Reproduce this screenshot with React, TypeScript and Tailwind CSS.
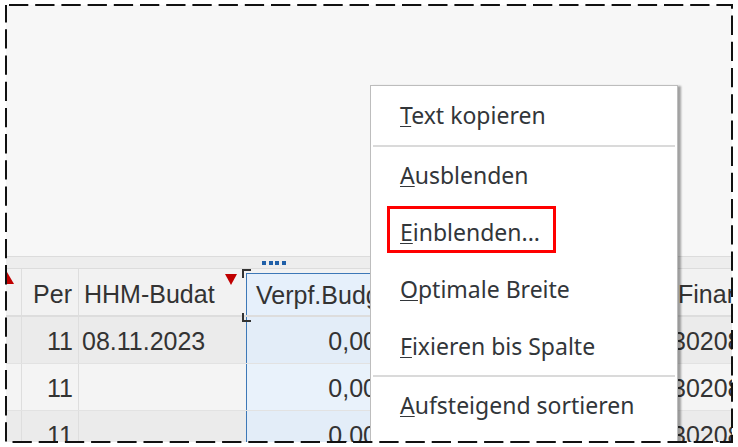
import React from "react";

const tableFont = { fontFamily: '"Liberation Sans", Arial, sans-serif' };
const menuFont = { fontFamily: '"Noto Sans", "Open Sans", sans-serif' };

function MenuItem({ first, rest, h = "h-[57px]", boxed = false }: { first: string; rest: string; h?: string; boxed?: boolean }) {
  return (
    <div className={`relative flex shrink-0 items-center pl-[29px] ${h} text-[23px] text-[#32363a]`}>
      {boxed && <div className="absolute left-[16px] top-[2px] h-[47px] w-[169px] border-[3px] border-[#ff0000]" />}
      <span className="leading-none">
        <span className="underline decoration-1 underline-offset-[2px]">{first}</span>
        {rest}
      </span>
    </div>
  );
}

function Row({ bg, blue, per, date }: { bg: string; blue: string; per: string; date: string }) {
  return (
    <div className={`grid h-[47px] shrink-0 grid-cols-[16px_57px_167px_139px_285px_1fr] border-b border-[#e2e2e2] text-[25px] text-[#333333] ${bg}`}>
      <div className="border-r border-[#dedede]" />
      <div className="flex items-center justify-end border-r border-[#dedede] pr-[5px] pt-[4px]">{per}</div>
      <div className="flex items-center pl-[3px] pt-[4px]">{date}</div>
      <div className={`flex items-center justify-end border-l border-[#3d78b7] pr-[8px] pt-[4px] ${blue}`}>0,00</div>
      <div className="border-r border-[#dedede]" />
      <div className="flex items-center whitespace-nowrap pl-[2px] pt-[4px]">3020800000</div>
    </div>
  );
}

export default function App() {
  return (
    <div className="relative h-[447px] w-[738px] overflow-hidden bg-white">
      <div className="relative ml-[6px] mt-[5px] flex h-[437px] w-[726px] flex-col overflow-hidden bg-[#f7f7f7]" style={tableFont}>
        <div className="h-[251px] shrink-0" />
        <div className="h-px shrink-0 bg-[#dcdcdc]" />
        <div className="flex h-[11px] shrink-0 items-center bg-[#ededed] pl-[256px]">
          <div className="flex gap-[2.5px]">
            <div className="h-[4px] w-[4px] bg-[#1f5fa8]" />
            <div className="h-[4px] w-[4px] bg-[#1f5fa8]" />
            <div className="h-[4px] w-[4px] bg-[#1f5fa8]" />
            <div className="h-[4px] w-[4px] bg-[#1f5fa8]" />
          </div>
        </div>
        <div className="h-px shrink-0 bg-[#dcdcdc]" />
        {/* header */}
        <div className="relative grid h-[48px] shrink-0 grid-cols-[16px_57px_167px_139px_285px_1fr] border-b-2 border-[#dddddd] bg-[#f2f2f2] text-[25px] text-[#333333]">
          <div className="relative border-r border-[#dedede]">
            <svg className="absolute left-0 top-0" width="16" height="20" viewBox="0 0 16 20">
              <polygon points="1,3 8,15 -6,15" fill="#c00000" />
            </svg>
          </div>
          <div className="flex items-center justify-end border-r border-[#dedede] pr-[6px] pt-[5px]">Per</div>
          <div className="relative flex items-center pl-[5px] pt-[5px]">
            HHM-Budat
            <svg className="absolute left-[146px] top-[5px]" width="12" height="11" viewBox="0 0 12 11">
              <polygon points="0,0 12,0 6,11" fill="#c00000" />
            </svg>
          </div>
          <div className="mt-[4px] flex items-center overflow-hidden whitespace-nowrap border-l border-t border-[#3d78b7] bg-[#e6f0fb] pl-[9px] pt-[2px]">
            Verpf.Budget
          </div>
          <div className="border-r border-[#dedede]" />
          <div className="flex items-center whitespace-nowrap pl-[8px] pt-[5px]">Finanzposition</div>
          {/* selection corner brackets */}
          <div className="absolute left-[236px] top-0 h-[9px] w-[9px] border-l-2 border-t-2 border-[#333333]" />
          <div className="absolute left-[236px] top-[44px] h-[9px] w-[9px] border-b-2 border-l-2 border-[#333333]" />
        </div>
        <Row bg="bg-[#ebebeb]" blue="bg-[#e3edf8]" per="11" date="08.11.2023" />
        <Row bg="bg-[#f4f4f4]" blue="bg-[#e9f2fb]" per="11" date="" />
        <Row bg="bg-[#ebebeb]" blue="bg-[#e3edf8]" per="11" date="" />

        {/* context menu */}
        <div
          className="absolute left-[364px] top-[80px] w-[308px] border border-[#bdbdbd] bg-white shadow-[3px_1px_2px_rgba(0,0,0,0.35)]"
          style={menuFont}
        >
          <MenuItem first="T" rest="ext kopieren" h="h-[59px]" />
          <div className="mx-[2px] h-[2px] bg-[#dadada]" />
          <MenuItem first="A" rest="usblenden" />
          <MenuItem first="E" rest="inblenden..." boxed />
          <MenuItem first="O" rest="ptimale Breite" />
          <MenuItem first="F" rest="ixieren bis Spalte" />
          <div className="mx-[2px] h-[2px] bg-[#dadada]" />
          <MenuItem first="A" rest="ufsteigend sortieren" />
          <MenuItem first="A" rest="bsteigend sortieren" />
        </div>
      </div>

      {/* dashed selection frame */}
      <svg className="pointer-events-none absolute left-0 top-0" width="738" height="447" viewBox="0 0 738 447">
        <rect x="6" y="5" width="726" height="437" fill="none" stroke="#111111" strokeWidth="2" strokeDasharray="19.3 6.9" strokeDashoffset="-3" />
      </svg>
    </div>
  );
}
